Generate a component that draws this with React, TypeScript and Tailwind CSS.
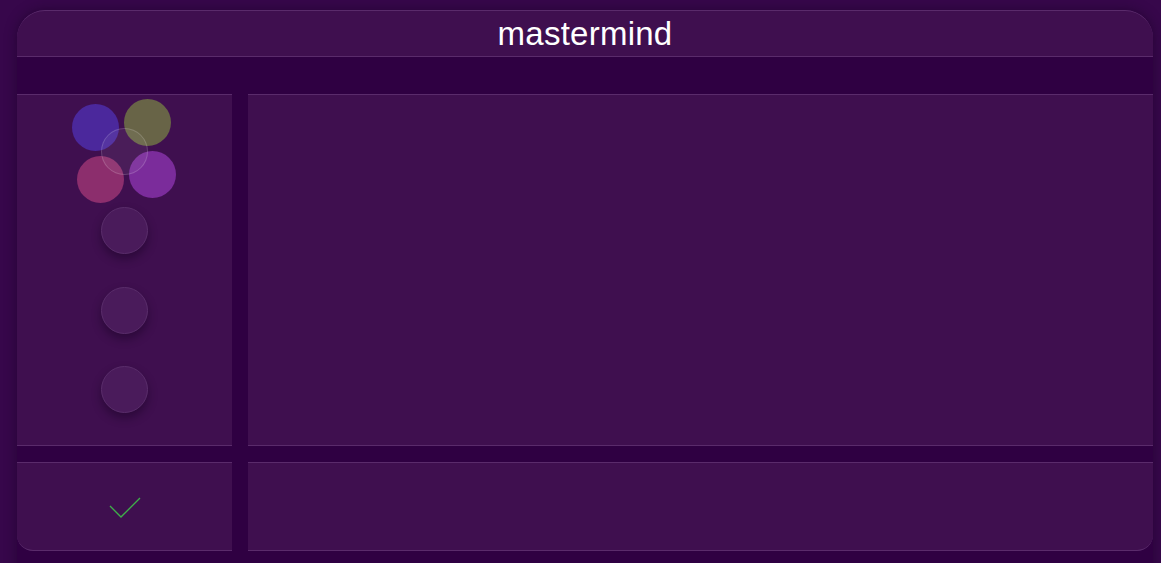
import React from "react";

const Slot = ({ children }: { children?: React.ReactNode }) => (
  <div className="relative w-[47px] h-[47px]">
    {children}
    <div className="absolute inset-0 rounded-full bg-[#4a1b5b] border border-[#5a2d6b] shadow-[0_5px_10px_rgba(20,0,30,0.45)]" />
  </div>
);

export default function App() {
  return (
    <div className="w-[1161px] h-[563px] overflow-hidden bg-[#37074b] pl-[17px] pr-[8px] pt-[10px]" style={{ fontFamily: '"Liberation Sans", Arial, sans-serif' }}>
      <div className="h-[600px] bg-[#2f0042] rounded-t-[28px] shadow-[0_0_12px_rgba(20,0,30,0.5)] flex flex-col">
        <div className="h-[47px] bg-[#3f0f4f] rounded-t-[28px] border-t border-b border-[#5a2b6b] flex items-center justify-center">
          <h1 className="text-white text-[33px] leading-none tracking-[0.25px]">mastermind</h1>
        </div>
        <div className="h-[37px]" />
        <div className="grid grid-cols-[215px_905px] grid-rows-[352px_89px] gap-x-[16px] gap-y-[16px]">
          <div className="bg-[#3f0f4f] border-y border-[#5a2b6b] flex flex-col items-center justify-evenly">
            <div className="relative w-[47px] h-[47px] mt-[1px]">
              <div className="absolute w-[47px] h-[47px] rounded-full bg-[#4b289c] left-[-29px] top-[-24px]" />
              <div className="absolute w-[47px] h-[47px] rounded-full bg-[#686447] left-[23px] top-[-29px]" />
              <div className="absolute w-[47px] h-[47px] rounded-full bg-[#8c2e6d] left-[-24px] top-[28px]" />
              <div className="absolute w-[47px] h-[47px] rounded-full bg-[#7b2c9b] left-[28px] top-[23px]" />
              <div className="absolute inset-0 rounded-full bg-[rgba(255,255,255,0.06)] border border-[rgba(255,255,255,0.16)]" />
            </div>
            <Slot />
            <Slot />
            <Slot />
          </div>
          <div className="bg-[#3f0f4f] border-y border-[#5a2b6b]" />
          <div className="bg-[#3f0f4f] border-y border-[#5a2b6b] rounded-bl-[16px] flex items-center justify-center">
            <svg width="34" height="24" viewBox="0 0 34 24" className="ml-[1px]">
              <polyline points="2,11 13,22 32,3" fill="none" stroke="#3fae4a" strokeWidth="1.4" />
            </svg>
          </div>
          <div className="bg-[#3f0f4f] border-y border-[#5a2b6b] rounded-br-[16px]" />
        </div>
      </div>
    </div>
  );
}
